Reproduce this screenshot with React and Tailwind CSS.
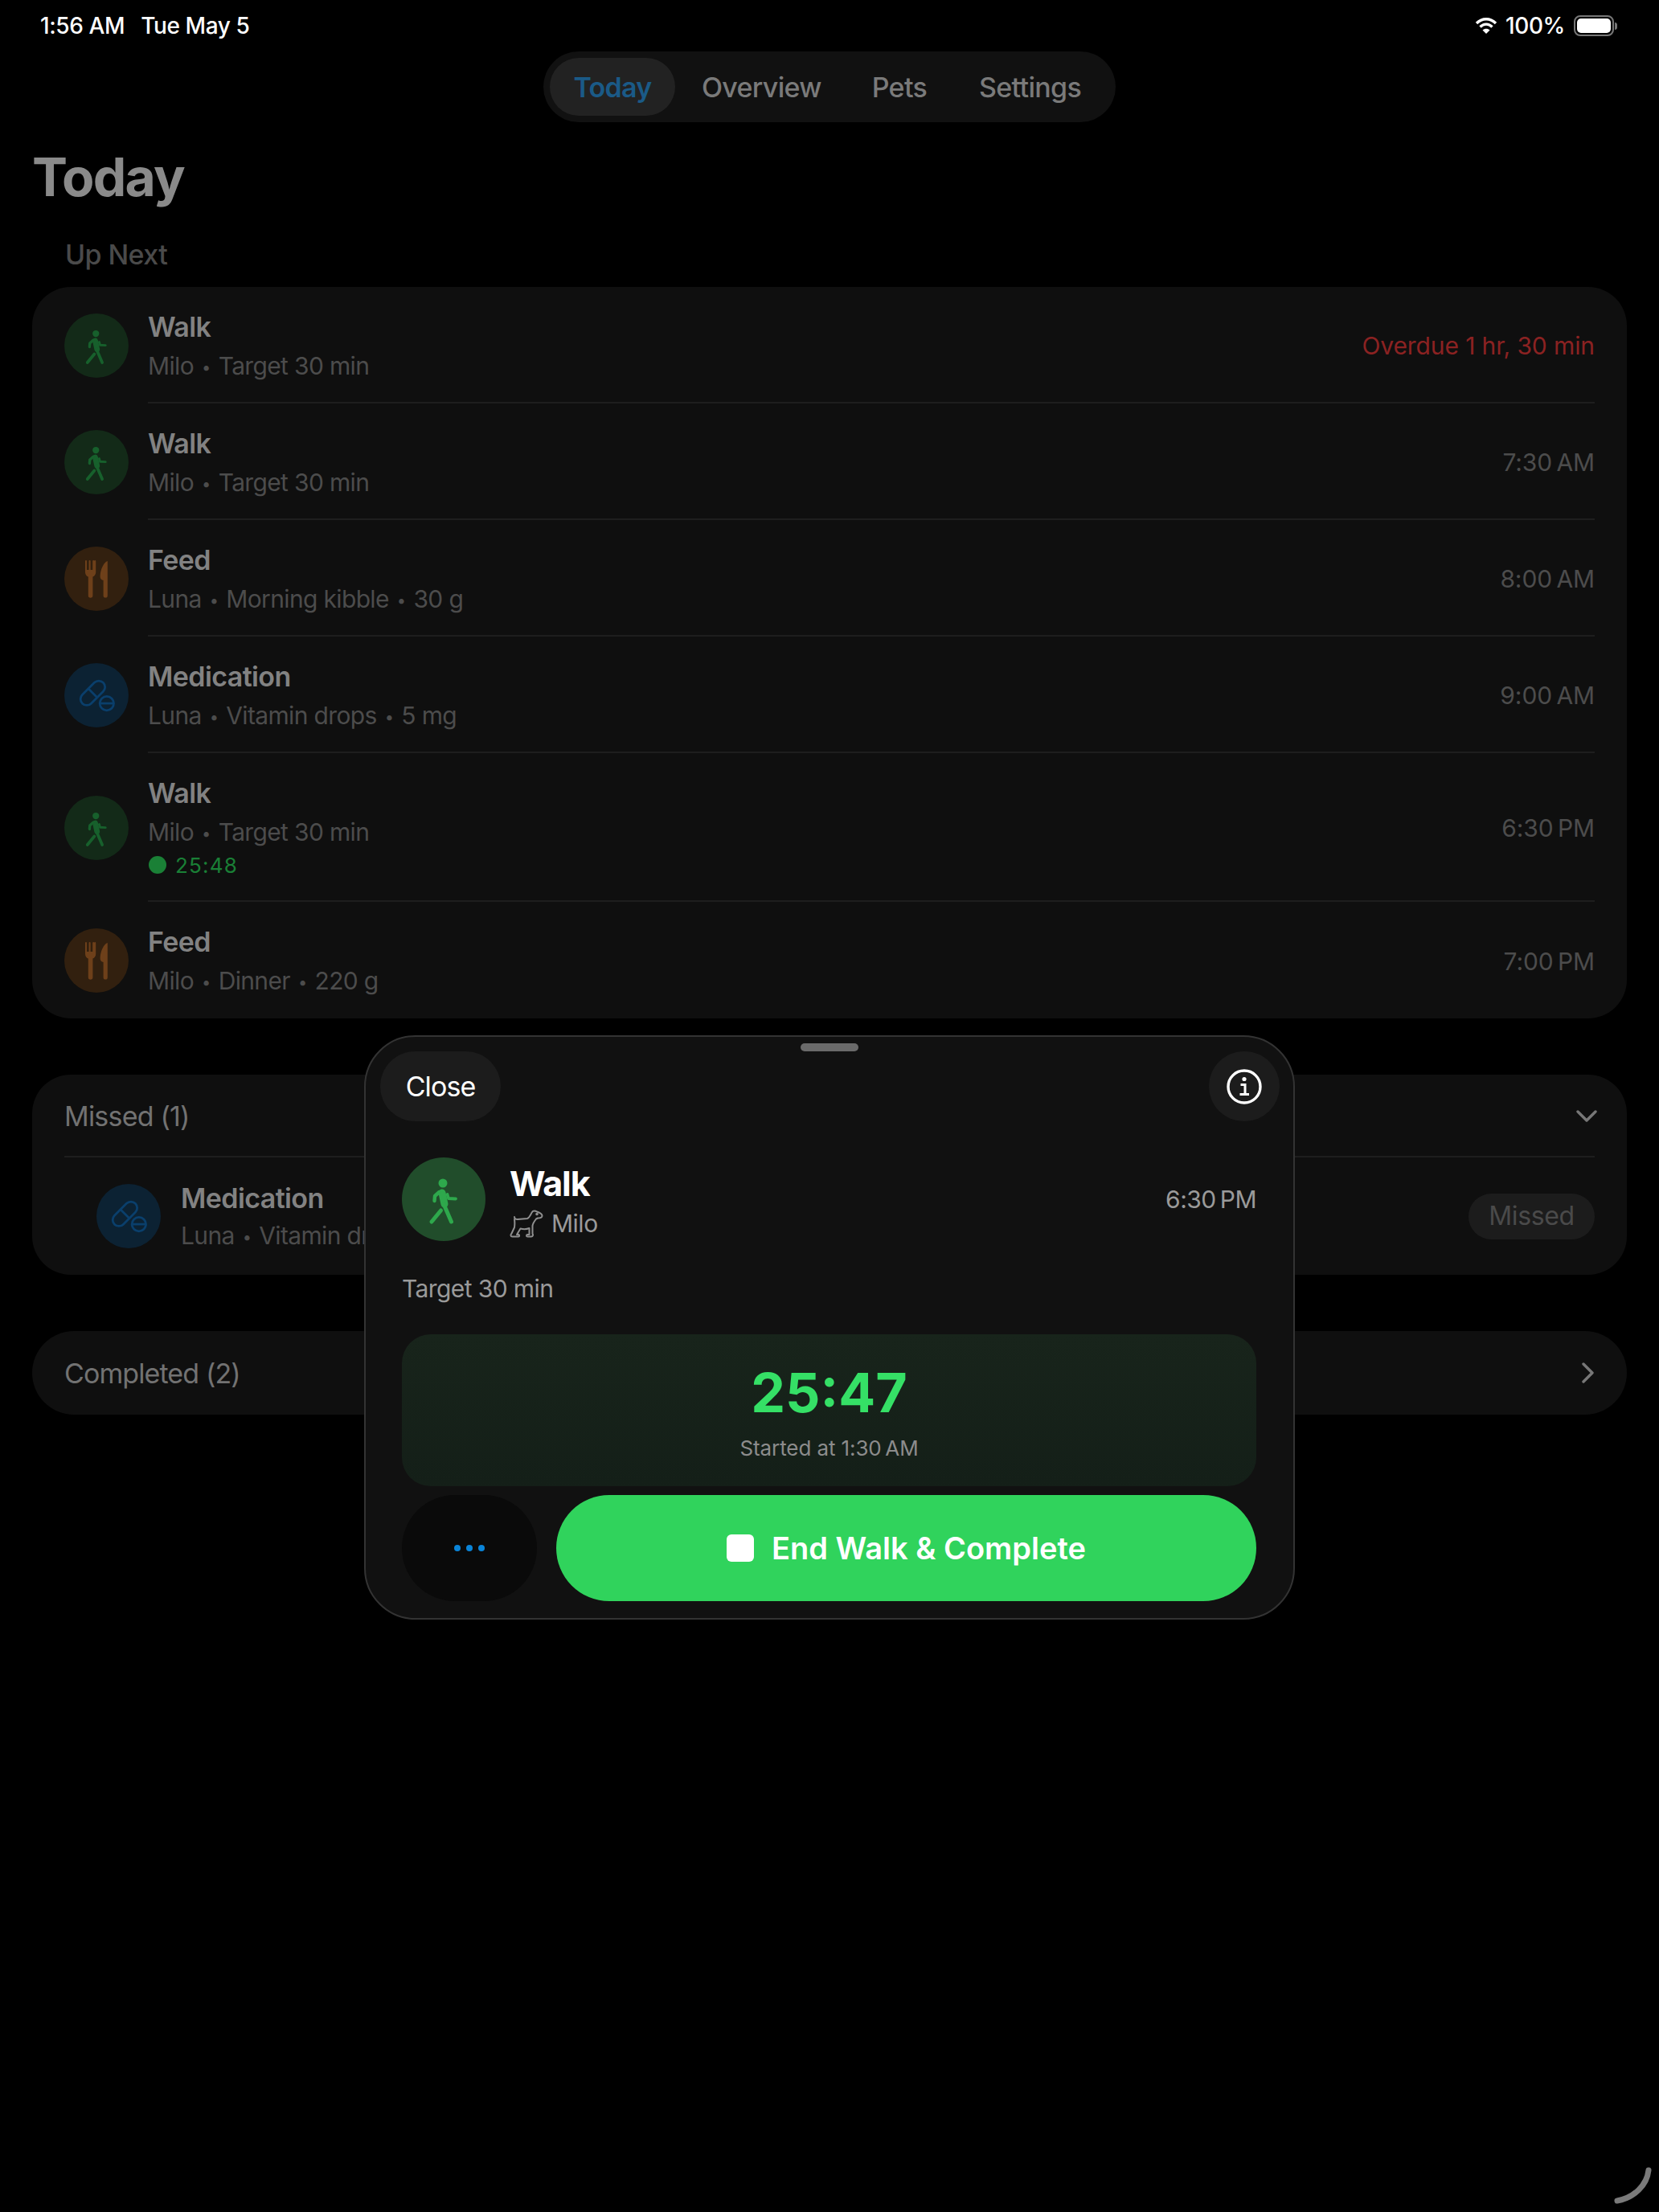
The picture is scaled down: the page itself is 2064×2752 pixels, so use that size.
const WalkIcon = ({ className, color }) => (
  <svg viewBox="0 0 40 64" className={className} fill="none" stroke={color} strokeLinecap="round" strokeLinejoin="round">
    <circle cx="19" cy="12" r="5.5" fill={color} stroke="none" />
    <path d="M18 24 L21 38" strokeWidth="9" />
    <path d="M14.5 23 L9 28 L8.5 34" strokeWidth="4.4" />
    <path d="M24.5 26 L26 31 L35 31.5" strokeWidth="3.8" />
    <path d="M20 38 L29.5 60" strokeWidth="5" />
    <path d="M16.5 46 L5 60" strokeWidth="5" />
  </svg>
);

const ForkKnifeIcon = ({ className, color }) => (
  <svg viewBox="0 0 30 48" className={className} fill={color}>
    <path d="M1 2 a1 1 0 0 1 2 0 V13 h2.6 V2 a1 1 0 0 1 2 0 V13 h2.6 V2 a1 1 0 0 1 2 0 V2 a1 1 0 0 1 2 0 V16 C14.2 19 12 21 10.4 21.6 V45 a2.8 2.8 0 0 1 -5.6 0 V21.6 C3 21 1 19 1 16 Z" />
    <path d="M28.6 2 C24 4 20 12 19.6 21 C19.6 24 21 25.4 23.6 26 V45 a2.6 2.6 0 0 0 5.2 0 V3 C28.8 2 28.8 2 28.6 2 Z" />
  </svg>
);

const PillsIcon = ({ className, color }) => (
  <svg viewBox="0 0 52 48" className={className} fill="none" stroke={color} strokeWidth="3">
    <g transform="rotate(-45 21 21)">
      <rect x="1" y="12.5" width="40" height="17" rx="8.5" />
      <path d="M21 12.5 V29.5" />
    </g>
    <circle cx="40" cy="35" r="9.5" />
    <path d="M30.5 35 H49.5" />
  </svg>
);

const DogIcon = ({ className }) => (
  <svg viewBox="0 0 42 35" className={className} fill="none" stroke="#8f8f8f" strokeWidth="2" strokeLinejoin="round" strokeLinecap="round">
    <path d="M6 9 C6 11 8 12 10 12 L22 11 C25 10 26 6 28 3 C29 1 32 1 34 2.5 C37 3.5 40.5 5 40.5 7.5 C40.5 10 37 10.5 35 10.5 L33 11.5 C31 14 29 17 28.5 20 L28.5 30 C29.5 31 29 33.5 27 33.5 L22.5 33.5 C20.5 33.5 20.5 31 22.5 31 L24.5 31 L24.5 23 C21 24.5 17 24.5 13.5 23.5 L9 31 L11 31 C12.5 31 12.5 33.5 11 33.5 L3.5 33.5 C1 33.5 1 31 2.5 29.5 L6 22 C6.5 18 6.5 15 6 12" />
    <circle cx="34" cy="5.5" r="0.8" fill="#8f8f8f" />
  </svg>
);

const IconCircle = ({ kind }) => {
  if (kind === 'walk') {
    return (
      <div className="w-[80px] h-[80px] shrink-0 rounded-full bg-[#132a18] flex items-center justify-center">
        <WalkIcon className="w-[30px] h-[48px]" color="#17602c" />
      </div>
    );
  }
  if (kind === 'feed') {
    return (
      <div className="w-[80px] h-[80px] shrink-0 rounded-full bg-[#32200f] flex items-center justify-center">
        <ForkKnifeIcon className="w-[30px] h-[48px]" color="#6e401a" />
      </div>
    );
  }
  return (
    <div className="w-[80px] h-[80px] shrink-0 rounded-full bg-[#0c2233] flex items-center justify-center">
      <PillsIcon className="w-[48px] h-[44px]" color="#0a3f6c" />
    </div>
  );
};

// the separators in the subtitles are smaller than Inter's own bullet
const Sub = ({ parts, className }) => (
  <div className={`text-[30px] tracking-[-0.65px] text-[#4c4c4c] whitespace-nowrap ${className}`}>
    {parts.map((p, i) => (
      <span key={p}>
        {i > 0 && <span className="text-[20px] mx-[10px] align-[2px]">•</span>}
        {p}
      </span>
    ))}
  </div>
);

const Row = ({ kind, title, sub, time, timer, timeColor = 'text-[#4c4c4c]', height = 'h-[145px]', last }) => (
  <div className={`${height} flex items-center pl-[40px] pr-[40px]`}>
    <IconCircle kind={kind} />
    <div className={`ml-[24px] flex-1 h-full flex items-center justify-between ${last ? '' : 'border-b-2 border-[#1e1e1e]'}`}>
      <div className="h-full pt-[26px]">
        <div className="text-[34px] leading-[48px] font-semibold tracking-[-0.6px] text-[#828282]">{title}</div>
        <Sub parts={sub} className="leading-[48px]" />
        {timer && (
          <div className="flex items-center h-[36px] mt-[-3px] gap-[11px] ml-[1px]">
            <span className="w-[22px] h-[22px] rounded-full bg-[#1a8036]" />
            <span className="text-[26px] tracking-[1.2px] text-[#1a8036]">{timer}</span>
          </div>
        )}
      </div>
      <div className={`pt-[3px] text-[30px] tracking-[-0.1px] ${timeColor}`}>{time}</div>
    </div>
  </div>
);

export default function App() {
  return (
    <div className="relative w-[2064px] h-[2752px] bg-black overflow-hidden font-[Inter,sans-serif]">
      {/* Status bar */}
      <div className="h-[64px] pl-[50px] pr-[52px] flex items-center justify-between text-white text-[28px] font-medium tracking-[-0.4px]">
        <div className="flex gap-[20px]">
          <span>1:56 AM</span>
          <span>Tue May 5</span>
        </div>
        <div className="flex items-center gap-[10px]">
          <svg viewBox="0 0 28 22" className="w-[28px] h-[22px]" fill="none" stroke="#fff" strokeLinecap="butt">
            <path d="M2 8 C9 1 19 1 26 8" strokeWidth="3.4" />
            <path d="M6.5 12.5 C11 8 17 8 21.5 12.5" strokeWidth="3.4" />
            <path d="M14 21 L9.5 16.5 C12 14 16 14 18.5 16.5 Z" fill="#fff" stroke="none" />
          </svg>
          <span>100%</span>
          <div className="flex items-center ml-[1px]">
            <div className="w-[50px] h-[26px] rounded-[8px] border-2 border-[#777] p-[2px]">
              <div className="w-full h-full rounded-[5px] bg-white" />
            </div>
            <div className="w-[3px] h-[9px] rounded-r-full bg-[#777] ml-[1px]" />
          </div>
        </div>
      </div>

      {/* Tabs */}
      <div className="flex justify-center">
        <div className="h-[88px] w-[712px] rounded-full bg-[#111] flex items-center pl-[8px] text-[34px] font-medium tracking-[-0.7px] text-[#7a7a7a]">
          <div className="w-[156px] h-[72px] rounded-full bg-[#222] flex items-center justify-center text-[#1a5a87] font-semibold">Today</div>
          <span className="ml-[33px]">Overview</span>
          <span className="ml-[63px]">Pets</span>
          <span className="ml-[65px]">Settings</span>
        </div>
      </div>

      <h1 className="mt-[28px] ml-[40px] text-[66px] leading-[80px] font-bold tracking-[-1.8px] text-[#8a8a8a]">Today</h1>
      <div className="mt-[37px] ml-[81px] text-[34px] leading-[40px] font-medium tracking-[-0.6px] text-[#4a4a4a]">Up Next</div>

      {/* Up next */}
      <div className="mt-[20px] mx-[40px] rounded-[48px] bg-[#0f0f0f] overflow-hidden">
        <Row kind="walk" title="Walk" sub={['Milo', 'Target 30 min']} time="Overdue 1 hr, 30 min" timeColor="text-[#8b2222]" />
        <Row kind="walk" title="Walk" sub={['Milo', 'Target 30 min']} time={'7:30\u2009AM'} />
        <Row kind="feed" title="Feed" sub={['Luna', 'Morning kibble', '30 g']} time={'8:00\u2009AM'} />
        <Row kind="med" title="Medication" sub={['Luna', 'Vitamin drops', '5 mg']} time={'9:00\u2009AM'} />
        <Row kind="walk" title="Walk" sub={['Milo', 'Target 30 min']} time={'6:30\u2009PM'} timer="25:48" height="h-[185px]" />
        <Row kind="feed" title="Feed" sub={['Milo', 'Dinner', '220 g']} time={'7:00\u2009PM'} last />
      </div>

      {/* Missed */}
      <div className="mt-[70px] mx-[40px] h-[249px] rounded-[48px] bg-[#0f0f0f] px-[40px]">
        <div className="h-[103px] pt-[2px] flex items-center justify-between border-b-2 border-[#1e1e1e] text-[34px] tracking-[-0.8px] text-[#727272]">
          <span>Missed (1)</span>
          <svg viewBox="0 0 26 16" className="w-[26px] h-[16px] mr-[-3px]" fill="none" stroke="#777" strokeWidth="3.4" strokeLinecap="round" strokeLinejoin="round">
            <path d="M2 2 L13 13 L24 2" />
          </svg>
        </div>
        <div className="h-[146px] pl-[40px] flex items-center">
          <IconCircle kind="med" />
          <div className="ml-[25px] flex-1 flex items-center justify-between">
            <div className="pt-[4px]">
              <div className="text-[34px] leading-[46px] font-semibold tracking-[-0.6px] text-[#828282]">Medication</div>
              <Sub parts={['Luna', 'Vitamin drops', '5 mg']} className="leading-[46px]" />
            </div>
            <div className="w-[157px] h-[57px] rounded-full bg-[#1c1c1c] flex items-center justify-center text-[32px] tracking-[-0.4px] text-[#4a4a4a]">Missed</div>
          </div>
        </div>
      </div>

      {/* Completed */}
      <div className="mt-[70px] mx-[40px] h-[104px] rounded-[52px] bg-[#0f0f0f] pl-[40px] pr-[40px] flex items-center justify-between text-[34px] tracking-[-0.9px] text-[#727272]">
        <span>Completed (2)</span>
        <svg viewBox="0 0 16 26" className="w-[16px] h-[26px]" fill="none" stroke="#777" strokeWidth="3.4" strokeLinecap="round" strokeLinejoin="round">
          <path d="M2 2 L13 13 L2 24" />
        </svg>
      </div>

      {/* Sheet */}
      <div className="absolute left-[453px] top-[1288px] w-[1158px] h-[727px] rounded-[64px] border-2 border-[#333] bg-[#111]">
        <div className="absolute left-[541px] top-[8px] w-[72px] h-[10px] rounded-full bg-[#6a6a6a]" />
        <div className="pt-[18px] pl-[18px] pr-[17px] flex justify-between">
          <div className="w-[150px] h-[87px] rounded-full bg-[#1c1c1c] flex items-center justify-center text-[34px] tracking-[-0.9px] text-white">Close</div>
          <div className="w-[88px] h-[87px] rounded-full bg-[#1c1c1c] flex items-center justify-center">
            <svg viewBox="0 0 44 44" className="w-[44px] h-[44px]" fill="none" stroke="#fff" strokeWidth="3.4">
              <circle cx="22" cy="22" r="20" />
              <circle cx="22" cy="12.5" r="2.6" fill="#fff" stroke="none" />
              <path d="M17.5 19.5 H23 V31 M16.5 31.5 H28" strokeWidth="3" />
            </svg>
          </div>
        </div>
        <div className="pl-[45px] pr-[46px]">
          <div className="mt-[45px] h-[104px] flex items-center">
            <div className="w-[104px] h-[104px] rounded-full bg-[#214d2b] flex items-center justify-center">
              <WalkIcon className="w-[40px] h-[64px]" color="#2ea84c" />
            </div>
            <div className="ml-[30px] flex-1 h-full pt-[6px]">
              <div className="text-[43px] leading-[52px] font-bold tracking-[-1px] text-white">Walk</div>
              <div className="mt-[2px] h-[44px] flex items-center gap-[10px] text-[30px] tracking-[-0.5px] text-[#9a9a9a]">
                <DogIcon className="w-[42px] h-[35px]" />
                <span>Milo</span>
              </div>
            </div>
            <div className="text-[30px] tracking-[-0.5px] text-[#9a9a9a]">{'6:30\u2009PM'}</div>
          </div>
          <div className="mt-[37px] text-[30px] leading-[44px] tracking-[-0.6px] text-[#9a9a9a]">Target 30 min</div>
          <div className="mt-[35px] h-[189px] rounded-[36px] bg-gradient-to-b from-[#18241b] to-[#141f18] flex flex-col items-center pt-[34px]">
            <div className="text-[68px] leading-[76px] font-bold text-[#35e066]">25:47</div>
            <div className="mt-[15px] text-[26px] leading-[34px] tracking-[-0.1px] text-[#8c8c8c]">{'Started at 1:30\u2009AM'}</div>
          </div>
          <div className="mt-[11px] flex gap-[24px]">
            <div className="w-[168px] h-[132px] rounded-full bg-[#0a0a0a] flex items-center justify-center gap-[7px]">
              <span className="w-[8px] h-[8px] rounded-full bg-[#0a84d8]" />
              <span className="w-[8px] h-[8px] rounded-full bg-[#0a84d8]" />
              <span className="w-[8px] h-[8px] rounded-full bg-[#0a84d8]" />
            </div>
            <div className="flex-1 h-[132px] rounded-full bg-[#30d35c] flex items-center justify-center gap-[22px]">
              <span className="w-[34px] h-[34px] rounded-[6px] bg-white" />
              <span className="text-[38px] font-semibold text-white">End Walk &amp; Complete</span>
            </div>
          </div>
        </div>
      </div>

      {/* Corner indicator */}
      <svg viewBox="0 0 50 50" className="absolute left-[2008px] top-[2694px] w-[50px] h-[50px]" fill="none" stroke="#7a7a7a" strokeWidth="7" strokeLinecap="round">
        <path d="M43 6 C41 24 26 40 4 44" />
      </svg>
    </div>
  );
}
